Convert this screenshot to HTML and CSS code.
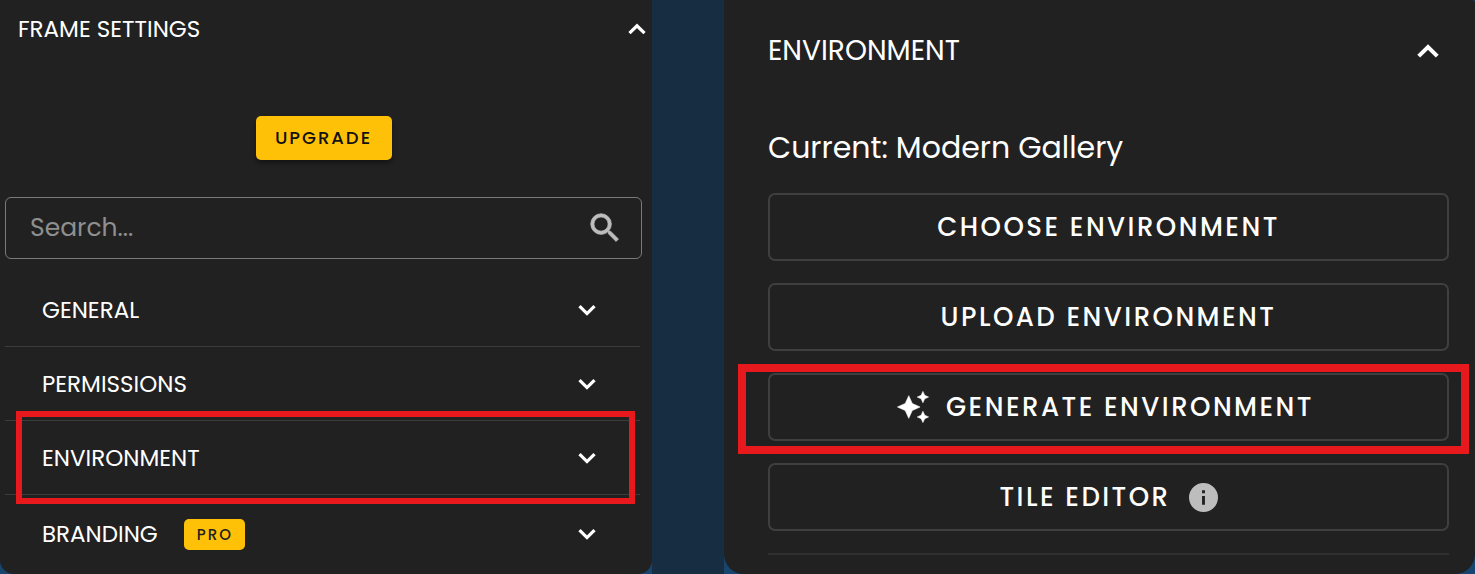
FILE: index.html
```html
<!DOCTYPE html>
<html lang="en">
<head>
    <meta charset="UTF-8">
    <meta name="viewport" content="width=device-width, initial-scale=1.0">
    <title>Frame Settings</title>
    <link rel="stylesheet" href="styles.css">
</head>
<body>
    <!-- shared icons -->
    <svg class="sprite" aria-hidden="true">
        <symbol id="chevron-down" viewBox="0 0 24 24">
            <path d="M6.700 9.300 12 14.500l5.300-5.200" fill="none" stroke="currentColor" stroke-width="2.300"/>
        </symbol>
        <symbol id="chevron-up" viewBox="0 0 24 24">
            <path d="M6.700 14.900l5.300-5.200 5.300 5.200" fill="none" stroke="currentColor" stroke-width="2.300"/>
        </symbol>
    </svg>

    <main class="container">
        <section class="panel frame-panel">
            <button class="panel-header" type="button" aria-expanded="true">
                <span>FRAME SETTINGS</span>
                <svg class="chevron"><use href="#chevron-up"/></svg>
            </button>

            <button class="upgrade" type="button">UPGRADE</button>

            <div class="search">
                <input id="search" type="text" placeholder="Search..." aria-label="Search">
                <label for="search">
                    <svg viewBox="0 0 24 24"><path stroke="currentColor" stroke-width=".5" d="M15.5 14h-.79l-.28-.27A6.47 6.47 0 0 0 16 9.5 6.5 6.5 0 1 0 9.5 16c1.61 0 3.09-.59 4.23-1.57l.27.28v.79l5 4.99L20.49 19l-4.99-5zm-6 0a4.5 4.5 0 1 1 0-9 4.5 4.5 0 0 1 0 9z"/></svg>
                </label>
            </div>

            <div class="menu">
                <button class="row" type="button">
                    <span>GENERAL</span>
                    <svg class="chevron"><use href="#chevron-down"/></svg>
                </button>
                <button class="row" type="button">
                    <span>PERMISSIONS</span>
                    <svg class="chevron"><use href="#chevron-down"/></svg>
                </button>
                <button class="row highlight" type="button">
                    <span>ENVIRONMENT</span>
                    <svg class="chevron"><use href="#chevron-down"/></svg>
                </button>
                <button class="row" type="button">
                    <span>BRANDING</span>
                    <span class="badge">PRO</span>
                    <svg class="chevron"><use href="#chevron-down"/></svg>
                </button>
            </div>
        </section>

        <section class="panel environment-panel">
            <button class="panel-header" type="button" aria-expanded="true">
                <span>ENVIRONMENT</span>
                <svg class="chevron"><use href="#chevron-up"/></svg>
            </button>

            <p class="current">Current: Modern Gallery</p>

            <div class="actions">
                <button class="action" type="button">CHOOSE ENVIRONMENT</button>
                <button class="action" type="button">UPLOAD ENVIRONMENT</button>
                <button class="action highlight" type="button">
                    <svg class="sparkle" viewBox="0 0 24 24"><path stroke="currentColor" stroke-width=".4" d="m19 9 1.25-2.75L23 5l-2.75-1.25L19 1l-1.25 2.75L15 5l2.75 1.25L19 9zm-7.5.5L9 4 6.5 9.5 1 12l5.5 2.5L9 20l2.5-5.5L17 12l-5.5-2.5zM19 15l-1.25 2.75L15 19l2.75 1.25L19 23l1.25-2.75L23 19l-2.75-1.25L19 15z"/></svg>
                    GENERATE ENVIRONMENT
                </button>
                <button class="action" type="button">
                    TILE EDITOR
                    <svg class="info" viewBox="0 0 24 24"><path d="M12 0a12 12 0 1 0 0 24 12 12 0 0 0 0-24zm1.200 18h-2.400v-7.200h2.400V18zm0-9.600h-2.400V6h2.400v2.400z"/></svg>
                </button>
            </div>
        </section>
    </main>
</body>
</html>
```
FILE: styles.css
```css
* {
    box-sizing: border-box;
}

body {
    margin: 0;
    min-height: 100vh;
    display: flex;
    background-color: #172e42;
    font-family: 'Poppins', 'Inter', sans-serif;
    color: #fff;
}

button, input {
    font: inherit;
    color: inherit;
    background: none;
    border: none;
    padding: 0;
    margin: 0;
}

button {
    cursor: pointer;
}

svg {
    fill: currentColor;
    flex-shrink: 0;
}

.sprite {
    display: none;
}

.container {
    flex: 1;
    display: grid;
    grid-template-columns: 652fr 751fr;
    gap: 72px;
}

.panel {
    position: relative;
    display: flex;
    flex-direction: column;
    background-color: #212121;
}

/* lighter blue behind the rounded corners */
.panel::before {
    content: '';
    position: absolute;
    inset: 0;
    z-index: -1;
    background-color: #17456e;
}

.panel-header, .row {
    display: flex;
    align-items: center;
    text-align: left;
}

.panel-header .chevron, .row .chevron {
    margin-left: auto;
}

/* Frame settings */
.frame-panel {
    padding: 0 10px 0 5px;
    border-radius: 0 0 14px 14px;
    font-size: 23px;
}

.frame-panel .chevron {
    width: 34px;
    height: 34px;
}

.frame-panel .panel-header {
    height: 58px;
    margin-right: -12px;
    padding-left: 13px;
}

.upgrade {
    align-self: center;
    width: 136px;
    height: 44px;
    margin: 58px 0 37px;
    padding-bottom: 1px;
    border-radius: 5px;
    background-color: #ffc107;
    box-shadow: 0 3px 4px rgba(0, 0, 0, 0.4);
    color: #111;
    font-size: 18px;
    font-weight: 500;
    letter-spacing: 2px;
}

.search {
    display: flex;
    align-items: center;
    height: 62px;
    padding: 0 17px 0 24px;
    border: 1px solid #7a7a7a;
    border-radius: 6px;
    color: #bdbdbd;
}

.search input {
    flex: 1;
    min-width: 0;
    height: 100%;
    outline: none;
    font-size: 25px;
}

.search input::placeholder {
    color: #8f8f8f;
    opacity: 1;
}

.search svg {
    display: block;
    width: 38px;
    height: 38px;
}

.menu {
    display: flex;
    flex-direction: column;
    margin: 14px 2px 0 0;
}

.row {
    height: 74px;
    padding: 0 36px 0 37px;
    border-bottom: 1px solid #3c3c3c;
}

.row:last-child {
    height: 78px;
    border-bottom: none;
}

.badge {
    margin-left: 26px;
    padding: 0 12px 0 13px;
    border-radius: 5px;
    background-color: #ffc107;
    color: #212121;
    font-size: 15px;
    font-weight: 500;
    line-height: 31px;
    letter-spacing: 2px;
}

/* Environment */
.environment-panel {
    padding: 0 26px 19px 44px;
    border-radius: 0 3px 20px 20px;
    font-size: 28px;
}

.environment-panel .chevron {
    width: 42px;
    height: 42px;
}

.environment-panel .panel-header {
    height: 102px;
}

.current {
    margin: 24px 0 23px;
    font-size: 30px;
    line-height: 44px;
}

.actions {
    display: flex;
    flex-direction: column;
    gap: 22px;
    padding-bottom: 22px;
    border-bottom: 2px solid #303030;
}

.action {
    display: flex;
    justify-content: center;
    align-items: center;
    height: 68px;
    border: 2px solid #3f3f3f;
    border-radius: 7px;
    font-size: 26px;
    font-weight: 500;
    letter-spacing: 0.095em;
}

.sparkle {
    width: 34px;
    height: 34px;
    margin: 0 16px 0 -7px;
}

.info {
    width: 29px;
    height: 29px;
    margin-left: 18px;
    color: #bdbdbd;
}

/* Red callout frame */
.highlight {
    position: relative;
}

.highlight::after {
    content: '';
    position: absolute;
    inset: -10px 5px -10px 11px;
    border: 6px solid #e8191c;
}

.action.highlight::after {
    inset: -11px -22px -15px -32px;
    border-width: 8px;
}
```
